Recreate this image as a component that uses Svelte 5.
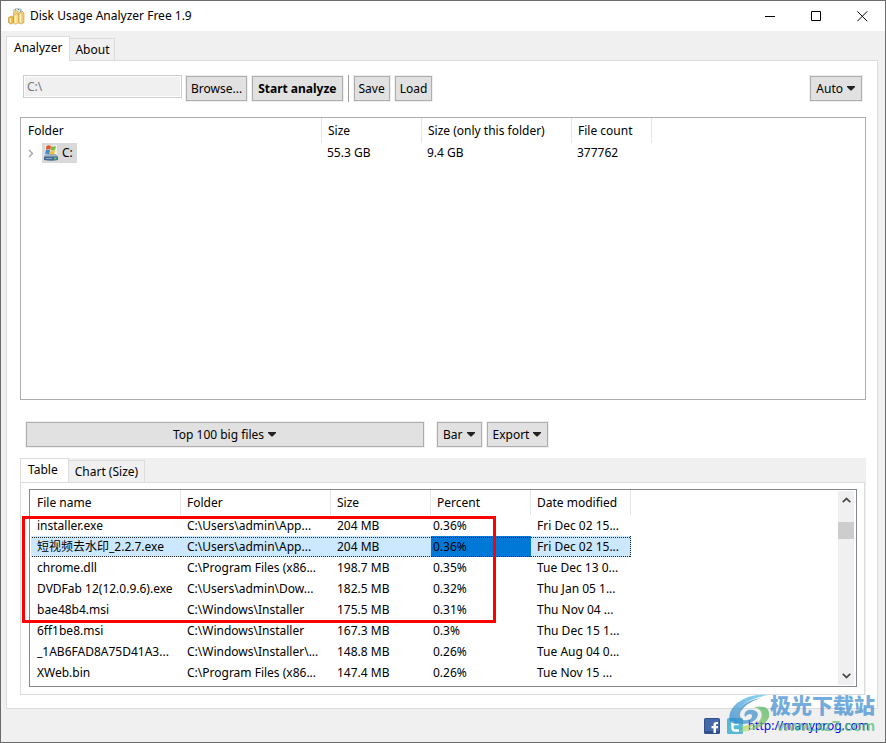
<script>
  const folderCols = ['Folder', 'Size', 'Size (only this folder)', 'File count'];
  const fileCols = ['File name', 'Folder', 'Size', 'Percent', 'Date modified'];
  const files = [
    ['installer.exe', 'C:\\Users\\admin\\App...', '204 MB', '0.36%', 'Fri Dec 02 15...'],
    ['短视频去水印_2.2.7.exe', 'C:\\Users\\admin\\App...', '204 MB', '0.36%', 'Fri Dec 02 15...'],
    ['chrome.dll', 'C:\\Program Files (x86...', '198.7 MB', '0.35%', 'Tue Dec 13 0...'],
    ['DVDFab 12(12.0.9.6).exe', 'C:\\Users\\admin\\Dow...', '182.5 MB', '0.32%', 'Thu Jan 05 1...'],
    ['bae48b4.msi', 'C:\\Windows\\Installer', '175.5 MB', '0.31%', 'Thu Nov 04 ...'],
    ['6ff1be8.msi', 'C:\\Windows\\Installer', '167.3 MB', '0.3%', 'Thu Dec 15 1...'],
    ['_1AB6FAD8A75D41A3...', 'C:\\Windows\\Installer\\...', '148.8 MB', '0.26%', 'Tue Aug 04 0...'],
    ['XWeb.bin', 'C:\\Program Files (x86...', '147.4 MB', '0.26%', 'Tue Nov 15 ...']
  ];
  let path = $state('C:\\');
  let selected = $state(1);
</script>

{#snippet arrow()}
  <svg class="arrow" width="8" height="5" viewBox="0 0 8 5" aria-hidden="true"><path d="M0 0h8v1L4.5 4.5h-1L0 1z" fill="#222" /></svg>
{/snippet}

<div class="window">
  <header class="titlebar">
    <svg width="17" height="17" viewBox="0 0 17 17" aria-hidden="true">
      <path d="M5 2.500l3-2 5 .5 1.500 3-5 3z" fill="#dfe9ee" stroke="#8fa5ab" stroke-width=".6" />
      <path d="M7 2h1M10 1.500h1M12 3h1" stroke="#3f6a62" />
      <path d="M5.500 4l2.500-1.500 2 1v8l-3 2-1.500-1.500z" fill="#f5d27a" stroke="#d3a447" stroke-width=".5" />
      <path d="M10.500 5l3.500-1.500 2 1.500v9.500L13 16l-2.500-1z" fill="#f4cc6b" stroke="#c08c2a" stroke-width=".5" />
      <path d="M5.500 7l3-1.500L10.500 7v8l-3 1.300-2-1z" fill="#f9dc8d" stroke="#c59434" stroke-width=".5" />
      <path d="M.5 9.500L3 8l2.500 1v5.500L3 16.200.5 14.500z" fill="#f1b940" stroke="#b98321" stroke-width=".5" />
      <path d="M7.500 8v7M12.500 6v8.500M2.500 10.500v4" stroke="#fff6d2" stroke-width="1.200" />
    </svg>
    <h1>Disk Usage Analyzer Free 1.9</h1>
    <div class="controls">
      <button aria-label="Minimize"><svg width="11" height="11" viewBox="0 0 11 11"><path d="M0 5.500h10" stroke="#000" /></svg></button>
      <button aria-label="Maximize"><svg width="11" height="11" viewBox="0 0 11 11"><path d="M.5.5h9v9H.5z" fill="none" stroke="#000" /></svg></button>
      <button aria-label="Close"><svg width="11" height="11" viewBox="0 0 11 11"><path d="M.3.3l10 10M10.300.3l-10 10" stroke="#000" /></svg></button>
    </div>
  </header>

  <main>
    <div class="tabs" role="tablist">
      <button class="tab active" role="tab" aria-selected="true">Analyzer</button>
      <button class="tab" role="tab" aria-selected="false">About</button>
    </div>
    <section class="panel">
      <div class="toolbar">
        <input type="text" bind:value={path} disabled aria-label="Path" />
        <button class="btn">Browse...</button>
        <button class="btn strong">Start analyze</button>
        <span class="divider"></span>
        <button class="btn">Save</button>
        <button class="btn">Load</button>
        <button class="btn menu last">Auto {@render arrow()}</button>
      </div>

      <div class="tree">
        <table>
          <colgroup><col class="wide" /><col class="mid" /><col class="long" /><col class="short" /></colgroup>
          <thead><tr>{#each folderCols as c}<th>{c}</th>{/each}</tr></thead>
          <tbody>
            <tr>
              <td>
                <div class="node">
                  <svg width="6" height="9" viewBox="0 0 6 9" aria-hidden="true"><path d="M1 1l3.500 3.500L1 8" fill="none" stroke="#a0a0a0" stroke-width="1.300" /></svg>
                  <span class="drive">
                    <svg width="14" height="16" viewBox="0 0 14 16" aria-hidden="true">
                      <path d="M1 0h12v10H1z" fill="#fff" opacity=".6" />
                      <path d="M2.500.8q2-1.300 4.500 0L6.300 4.800q-2-1-4.500 0z" fill="#e8552b" />
                      <path d="M7.500 1q2 1.200 4.500 0l-1 4q-2 1-4.500 0z" fill="#7cb93c" />
                      <path d="M1.800 5.300q2-1 4.300 0l-.8 4q-2-1-4.200 0z" fill="#3b8ad8" />
                      <path d="M6.500 5.600q2 1.200 4.500 0l-.8 4q-2 .8-4.500-.2z" fill="#f4bf2e" />
                      <path d="M2 9.500h10l2 2.500v3q-7 1.500-14 0v-3z" fill="#48698f" />
                      <path d="M2 9.500h10l1.500 2H.5z" fill="#9db7ca" />
                      <path d="M2 13.500h6" stroke="#86a6c4" />
                      <path d="M10 13.500h2.500" stroke="#62e36b" stroke-width="1.500" />
                    </svg>
                    C:
                  </span>
                </div>
              </td>
              <td>55.3 GB</td><td>9.4 GB</td><td>377762</td>
            </tr>
          </tbody>
        </table>
      </div>

      <div class="actions">
        <button class="btn menu grow">Top 100 big files {@render arrow()}</button>
        <button class="btn menu">Bar {@render arrow()}</button>
        <button class="btn menu">Export {@render arrow()}</button>
      </div>

      <div class="sub">
        <div class="tabs" role="tablist">
          <button class="tab active" role="tab" aria-selected="true">Table</button>
          <button class="tab" role="tab" aria-selected="false">Chart (Size)</button>
        </div>
        <div class="subpanel">
          <div class="list">
            <table class="files">
              <colgroup><col class="name" /><col class="dir" /><col class="mid" /><col class="mid" /><col class="mid" /></colgroup>
              <thead><tr>{#each fileCols as c}<th>{c}</th>{/each}</tr></thead>
              <tbody>
                {#each files as f, i}
                  <tr class:selected={i === selected} onclick={() => (selected = i)}>
                    {#each f as v}<td>{v}</td>{/each}
                  </tr>
                {/each}
              </tbody>
            </table>
            <div class="scroll">
              <svg width="9" height="6" viewBox="0 0 9 6" aria-hidden="true"><path d="M.7 5.200l3.800-3.700 3.800 3.700" fill="none" stroke="#505050" stroke-width="1.800" /></svg>
              <span class="thumb"></span>
              <svg width="9" height="6" viewBox="0 0 9 6" aria-hidden="true"><path d="M.7.8l3.800 3.700L8.300.8" fill="none" stroke="#505050" stroke-width="1.800" /></svg>
            </div>
          </div>
          <div class="highlight"></div>
        </div>
      </div>
    </section>
  </main>

  <footer>
    <a href="http://manyprog.com" aria-label="Facebook">
      <svg width="16" height="16" viewBox="0 0 16 16"><rect width="16" height="16" rx="1.500" fill="#304f8c" /><rect x="1" y="1" width="14" height="12" fill="#4468aa" /><path d="M14 4h-2q-2.500 0-2.500 2.500V8H7.500v2.200h2V15H12v-4.800h2V8h-2V6.800q0-.8.8-.8H14z" fill="#fff" /></svg>
    </a>
    <a href="http://manyprog.com" aria-label="Twitter">
      <svg width="16" height="16" viewBox="0 0 16 16"><rect width="16" height="16" rx="1.500" fill="#55b9d5" /><path d="M5.500 3v7q0 2.500 2.500 2.500h4M5.500 6h6" stroke="#fff" stroke-width="2.500" fill="none" /></svg>
    </a>
    <a class="link" href="http://manyprog.com">http://manyprog.com</a>
  </footer>

  <div class="watermark" aria-hidden="true">
    <svg width="42" height="40" viewBox="0 0 42 40">
      <defs>
        <linearGradient id="wb" x1="0" y1="1" x2="1" y2="0"><stop offset="0" stop-color="#2a80c8" /><stop offset="1" stop-color="#62c8f2" /></linearGradient>
        <linearGradient id="wg" x1="0" y1="1" x2="1" y2="0"><stop offset="0" stop-color="#b4da60" /><stop offset="1" stop-color="#45b260" /></linearGradient>
      </defs>
      <path d="M41 1Q22-1 9 9Q-1 18 2 27Q6 32 13 29Q6 26 9 18Q15 5 41 1z" fill="url(#wb)" />
      <path d="M33 4Q18 9 13 17Q10 23 15 26Q25 27 24 21Q21 18 17 23Q15 19 20 16Q28 15 30 20Q29 29 15 30Q6 28 8 19Q14 7 33 4z" fill="#3e91cb" />
      <path d="M26 13Q43 10 41 23Q36 36 12 38Q29 34 33 24Q36 16 26 13z" fill="url(#wg)" />
      <path d="M13 32Q22 32 29 27Q23 36 11 38Q17 35 13 32z" fill="#b4da60" />
    </svg>
    <div class="words"><b>极光下载站</b><span>www.xz7.com</span></div>
  </div>
</div>

<style>
  :global(body) { margin: 0; }
  .window {
    position: relative;
    box-sizing: border-box;
    display: flex;
    flex-direction: column;
    min-height: 100vh;
    border: 1px solid #6b6b6b;
    background: #f0f0f0;
    color: #000;
    font: 12px/16px "Noto Sans", "Noto Sans CJK SC", sans-serif;
  }
  button, input { font: inherit; color: inherit; margin: 0; border-radius: 0; }
  button { white-space: nowrap; }
  svg { display: block; flex: none; }

  .titlebar { display: flex; align-items: center; height: 30px; padding-left: 7px; gap: 5px; background: #fff; }
  h1 { margin: 0; flex: 1; font-size: 12px; font-weight: 400; }
  .controls { display: flex; height: 100%; }
  .controls button { width: 46px; padding: 0; border: 0; background: none; display: grid; place-items: center; }

  main { flex: 1; display: flex; flex-direction: column; padding: 5px 7px 0 5px; }
  .tabs { display: flex; align-items: flex-end; height: 24px; }
  .tab { height: 22px; padding: 0 5px; border: 1px solid #dcdcdc; border-width: 1px 1px 0 0; background: #f0f0f0; }
  .tab.active { position: relative; height: 25px; margin-bottom: -1px; padding: 0 7px 3px; border-width: 1px 1px 0; background: #fff; }
  .sub .tab { padding: 0 6px; }
  .sub .tab.active { padding: 0 10px 3px 7px; }

  .panel { flex: 1; display: flex; flex-direction: column; padding: 14px 11px 13px 13px; border: 1px solid #dcdcdc; background: #fff; }
  .toolbar { display: flex; align-items: center; gap: 5px; height: 27px; padding: 0 4px 0 3px; }
  .toolbar input {
    box-sizing: border-box; width: 159px; height: 23px; margin: 0 -1px 4px 0; padding: 0 3px;
    border: 1px solid #ccc; box-shadow: inset 0 0 0 1px #fff; background: #f0f0f0; color: #777;
  }
  .btn {
    box-sizing: border-box; display: flex; align-items: center; justify-content: center; gap: 4px;
    height: 25px; padding: 0 4px; border: 1px solid #adadad; background: #e1e1e1; box-shadow: 0 0 0 1px #f0f0f0;
  }
  .menu { padding: 0 6px 0 5px; }
  .strong { font-weight: 700; padding: 0 5px; }
  .last { margin-left: auto; }
  .divider { width: 1px; height: 27px; background: #a0a0a0; }

  .tree { flex: 1; margin-top: 15px; border: 1px solid #adadad; }
  table { border-collapse: separate; border-spacing: 0; table-layout: fixed; width: 0; }
  .wide { width: 301px; }
  .mid { width: 100px; }
  .long { width: 150px; }
  .short { width: 80px; }
  .name { width: 151px; }
  .dir { width: 150px; }
  th { height: 25px; padding: 0 0 0 6px; font-weight: 400; text-align: left; white-space: nowrap; background: linear-gradient(#e5e5e5, #e5e5e5) right center / 1px 100% no-repeat; }
  td { height: 20px; padding: 0 0 0 5px; white-space: nowrap; }
  th:first-child, td:first-child { padding-left: 7px; }
  .node { display: flex; align-items: center; gap: 8px; }
  .drive { display: flex; align-items: center; gap: 4px; height: 20px; padding: 0 4px 0 2px; background: #d9d9d9; }

  .actions { display: flex; gap: 5px; padding: 22px 0 11px 6px; }
  .grow { width: 398px; margin-right: 8px; }

  .sub { background: #f0f0f0; padding-right: 1px; }
  .subpanel { position: relative; padding: 6px 7px 7px 8px; border: 1px solid #dcdcdc; background: #fff; }
  .list { display: flex; justify-content: space-between; height: 196px; border: 1px solid #828790; overflow: hidden; }
  .files { height: 0; }
  .files td { height: 21px; padding: 0 0 0 6px; }
  .files td:first-child { padding-left: 7px; }
  .files td:nth-child(4) { padding-left: 2px; }
  .selected td { background: linear-gradient(90deg, #222 50%, transparent 50%) 0 1px / 2px 1px repeat-x, linear-gradient(90deg, #222 50%, transparent 50%) 0 100% / 2px 1px repeat-x, #cce8ff; }
  .selected td:first-child { box-shadow: inset 1px 0 #fff; }
  .selected td:nth-child(4) { background-color: #0078d7; }
  .selected td:last-child { border-right: 1px dotted #222; }
  .scroll { display: flex; flex-direction: column; align-items: center; box-sizing: border-box; width: 16px; margin: 1px 2px 1px 1px; padding: 6px 0; background: #f0f0f0; }
  .thumb { width: 16px; height: 17px; margin: 19px 0 auto; background: #cdcdcd; }
  .highlight { position: absolute; left: 1px; top: 33px; width: 468px; height: 101px; border: 3px solid #f00; pointer-events: none; }

  footer { display: flex; align-items: center; justify-content: flex-end; gap: 7px; height: 33px; padding-right: 16px; }
  .link { color: #00f; text-decoration: none; margin-left: -2px; }

  .watermark { position: absolute; right: 10px; bottom: 8px; display: flex; opacity: .72; pointer-events: none; }
  .words { display: flex; flex-direction: column; font-family: "Noto Sans CJK SC", sans-serif; font-weight: 700; }
  .words b { color: #3f8ed0; font-size: 21px; line-height: 20px; padding-bottom: 4px; }
  .words span { color: #55bd72; font: 700 15px/16px "Liberation Sans", sans-serif; text-align: right; }
</style>
